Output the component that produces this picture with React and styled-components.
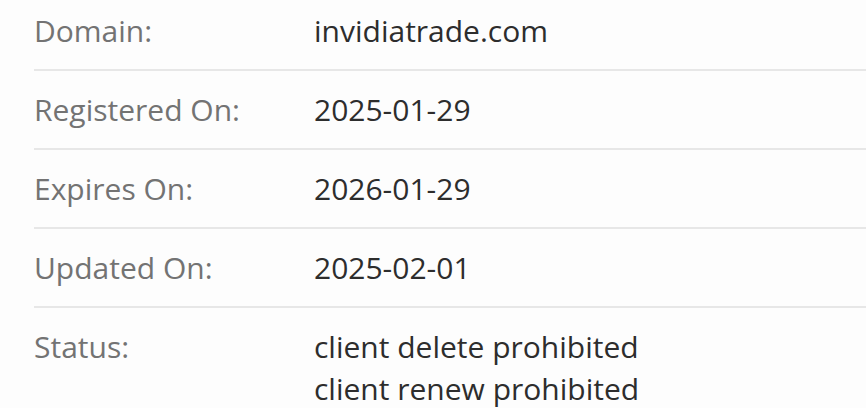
import styled, { createGlobalStyle } from "styled-components";

const GlobalStyle = createGlobalStyle`
  html, body {
    margin: 0;
    padding: 0;
    background-color: #fdfdfd;
    overflow: hidden;
  }

  body {
    font-family: "Open Sans", "Noto Sans", sans-serif;
  }
`;

const WhoisWrapper = styled.div`
  margin-top: -8px;
  padding-left: 34px;
`;

const WhoisRow = styled.div`
  display: grid;
  grid-template-columns: 280px 1fr;
  padding-top: 18px;
  padding-bottom: 17px;

  font-size: 30px;
  line-height: 42px;

  border-bottom: 2px solid #e7e7e7;

  &:last-child {
    border-bottom: 0;
  }
`;

const Label = styled.div`
  color: #737373;
`;

const Value = styled.div`
  color: #2d2d2d;
`;

const ROWS = [
  { label: "Domain:", values: ["invidiatrade.com"] },
  { label: "Registered On:", values: ["2025-01-29"] },
  { label: "Expires On:", values: ["2026-01-29"] },
  { label: "Updated On:", values: ["2025-02-01"] },
  { label: "Status:", values: ["client delete prohibited", "client renew prohibited"] },
];

const App = () => (
  <>
    <GlobalStyle />
    <WhoisWrapper>
      {ROWS.map((row) => (
        <WhoisRow key={row.label}>
          <Label>{row.label}</Label>
          <Value>
            {row.values.map((it) => (
              <div key={it}>{it}</div>
            ))}
          </Value>
        </WhoisRow>
      ))}
    </WhoisWrapper>
  </>
);

export default App;
